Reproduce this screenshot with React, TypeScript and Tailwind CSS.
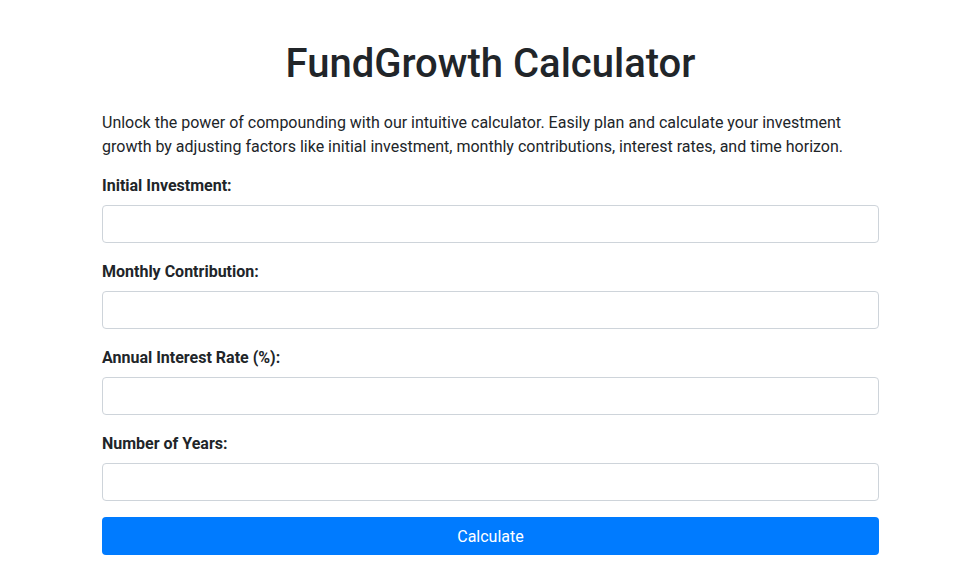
const fields = [
  { id: "initial", label: "Initial Investment:" },
  { id: "monthly", label: "Monthly Contribution:" },
  { id: "rate", label: "Annual Interest Rate (%):" },
  { id: "years", label: "Number of Years:" },
];

export default function App() {
  return (
    <div className="bg-white pt-[40px] font-['Roboto',sans-serif] text-[16px] leading-6 text-[#212529]">
      <div className="ml-[102px] w-[777px]">
        {/* Header */}
        <h1 className="mb-[21px] text-center text-[40px] font-medium leading-[48px]">
          FundGrowth Calculator
        </h1>
        <p className="mb-[14px] pt-[2px]">
          Unlock the power of compounding with our intuitive calculator. Easily plan and calculate your
          investment growth by adjusting factors like initial investment, monthly contributions, interest
          rates, and time horizon.
        </p>

        {/* Form */}
        <form onSubmit={(e) => e.preventDefault()}>
          {fields.map((f) => (
            <div key={f.id} className="mb-4">
              <label htmlFor={f.id} className="mb-[7px] block pt-px font-bold">
                {f.label}
              </label>
              <input
                id={f.id}
                type="number"
                className="block h-[38px] w-full rounded-[4px] border border-[#ced4da] bg-white px-3 py-1.5 text-[16px] text-[#495057] outline-none"
              />
            </div>
          ))}
          <button
            type="submit"
            className="block h-[38px] w-full rounded-[4px] bg-[#007bff] pt-px text-white"
          >
            Calculate
          </button>
        </form>
      </div>
    </div>
  );
}
